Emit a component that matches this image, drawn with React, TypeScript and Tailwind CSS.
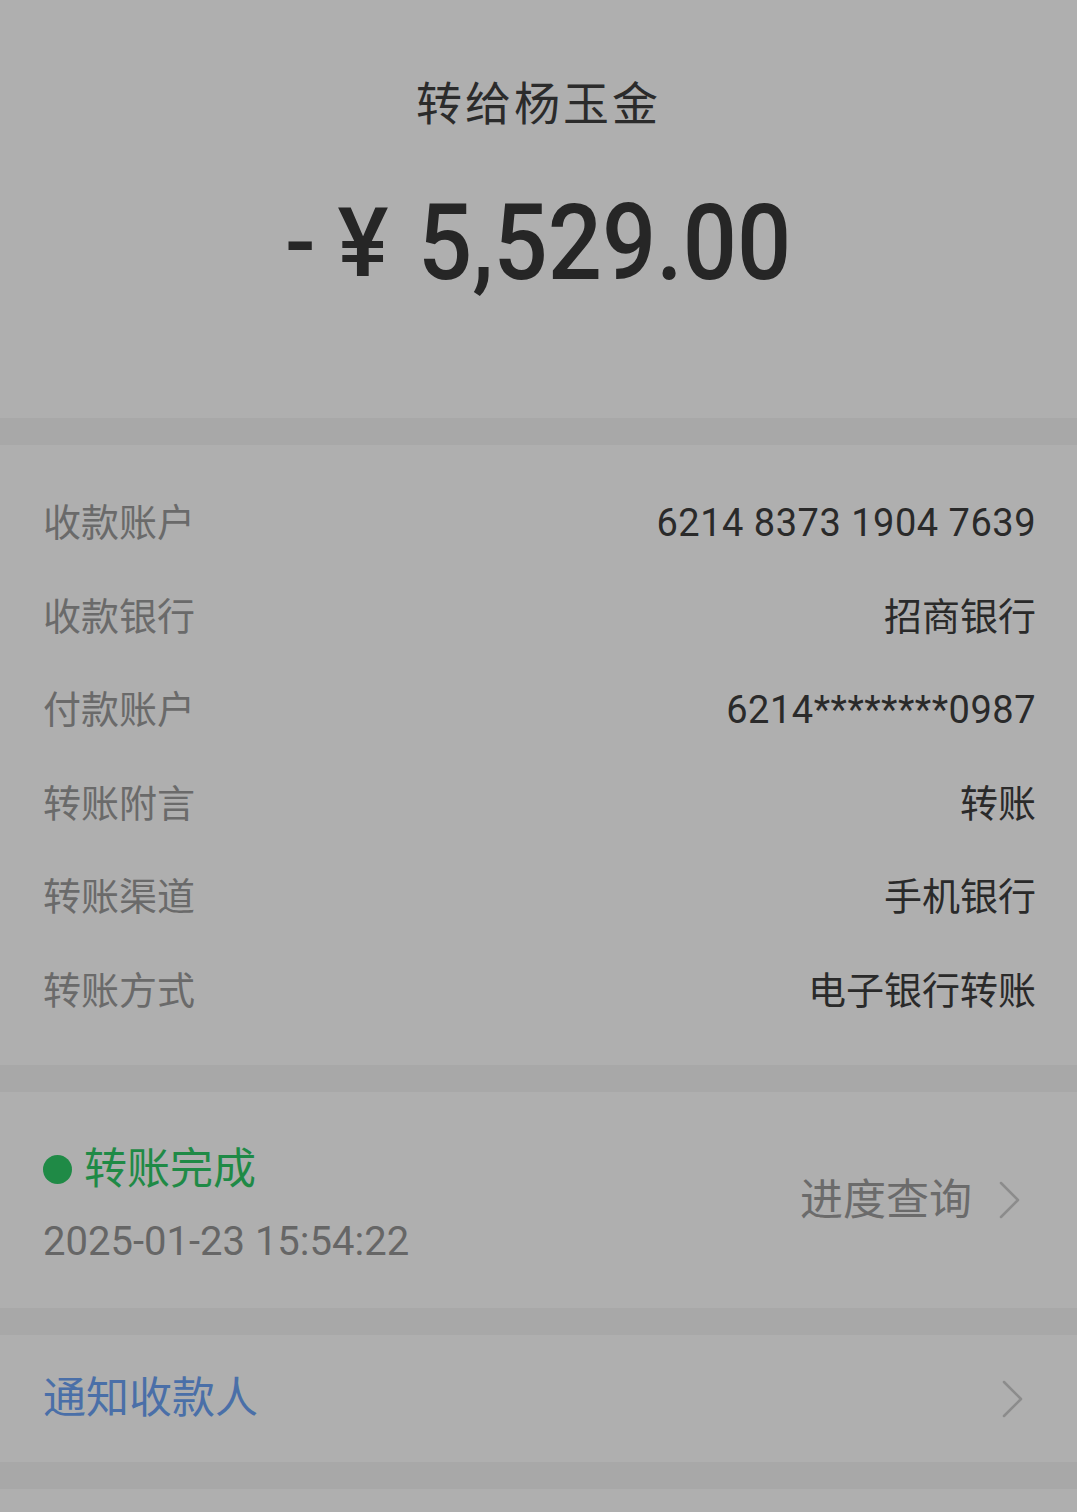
const rows = [
  { label: '收款账户', value: '6214 8373 1904 7639', num: true },
  { label: '收款银行', value: '招商银行' },
  { label: '付款账户', value: '6214********0987', num: true },
  { label: '转账附言', value: '转账' },
  { label: '转账渠道', value: '手机银行' },
  { label: '转账方式', value: '电子银行转账' },
];

const Chevron = () => (
  <svg width="24" height="40" viewBox="0 0 24 40" fill="none" className="shrink-0">
    <path d="M3 3 L20 20 L3 37" stroke="#8c8c8c" strokeWidth="2.5" strokeLinecap="round" strokeLinejoin="round" />
  </svg>
);

const Band = () => <div className="h-[27px] bg-[#a8a8a8]" />;

export default function App() {
  return (
    <div
      className="w-[1077px] h-[1512px] bg-[#afafaf] overflow-hidden"
      style={{ fontFamily: 'Roboto, "Noto Sans CJK SC", sans-serif' }}
    >
      {/* header */}
      <div className="h-[418px] flex flex-col items-center">
        <div className="mt-[74px] text-[46px] leading-[60px] tracking-[3px] text-[#2b2b2b]">转给杨玉金</div>
        <div className="mt-[56px] flex items-center text-[#262626] font-medium leading-none">
          <span className="text-[90px] mr-[22px]">-</span>
          <span className="text-[96px] mr-[30px]">¥</span>
          <span className="text-[106px] scale-x-[0.9] origin-left -mr-[41px]">5,529.00</span>
        </div>
      </div>

      <Band />

      {/* details */}
      <div className="pt-[32px] pb-[27px] pl-[43px] pr-[41px]">
        {rows.map((r) => (
          <div key={r.label} className="h-[93.5px] flex items-center justify-between">
            <span className="text-[38px] text-[#6a6a6a]">{r.label}</span>
            <span className={r.num ? 'text-[38px] tracking-[0.5px] text-[#2a2a2a]' : 'text-[38px] text-[#2a2a2a]'}>
              {r.value}
            </span>
          </div>
        ))}
      </div>

      <Band />

      {/* status */}
      <div className="h-[216px] pl-[43px] pr-[55px] flex items-center justify-between">
        <div className="self-start pt-[51px] flex flex-col">
          <div className="flex items-center h-[52px]">
            <span className="w-[29px] h-[29px] rounded-full bg-[#1f8a46] mr-[12px]" />
            <span className="text-[43px] leading-[52px] text-[#1f8a46]">转账完成</span>
          </div>
          <div className="mt-[23px] text-[40px] leading-[48px] text-[#666666]">2025-01-23 15:54:22</div>
        </div>
        <div className="flex items-center gap-[26px]">
          <span className="text-[43px] text-[#6b6b6b]">进度查询</span>
          <Chevron />
        </div>
      </div>

      <Band />

      {/* notify */}
      <div className="h-[127px] pl-[43px] pr-[52px] flex items-center justify-between">
        <span className="text-[43px] text-[#4a6fa8]">通知收款人</span>
        <Chevron />
      </div>

      <Band />
    </div>
  );
}
